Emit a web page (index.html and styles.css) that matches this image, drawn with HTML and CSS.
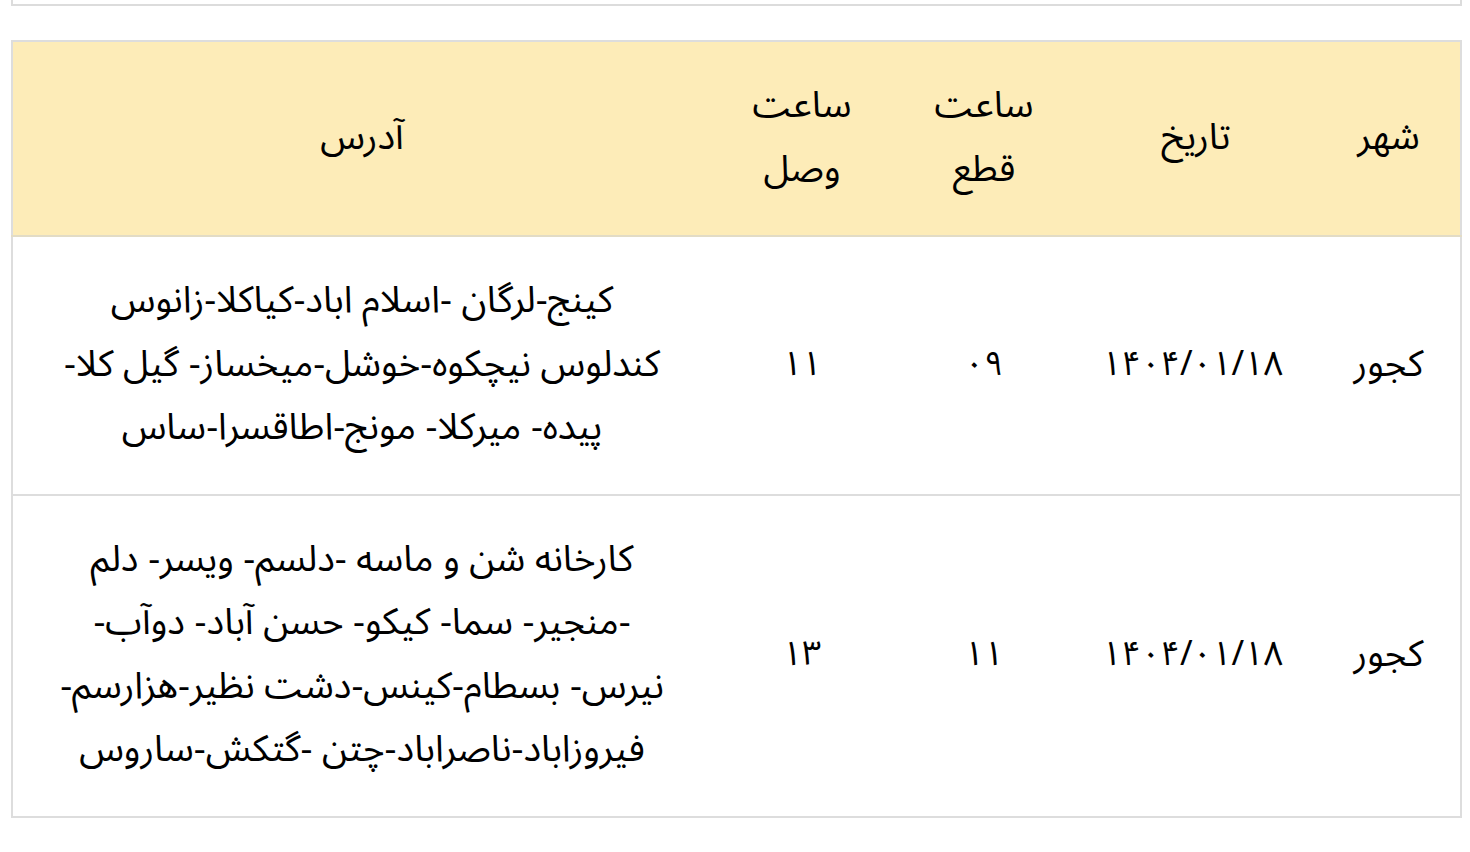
FILE: index.html
```html
<!DOCTYPE html>
<html lang="fa" dir="rtl">
<head>
<meta charset="utf-8">
<title>جدول خاموشی</title>
<link rel="stylesheet" href="styles.css">
</head>
<body>
<div class="page">
  <div class="prev-box"></div>
  <table class="outage">
    <colgroup>
      <col class="c-city">
      <col class="c-date">
      <col class="c-time">
      <col class="c-time">
      <col class="c-addr">
    </colgroup>
    <thead>
      <tr>
        <th>شهر</th>
        <th>تاریخ</th>
        <th>ساعت<br>قطع</th>
        <th>ساعت<br>وصل</th>
        <th>آدرس</th>
      </tr>
    </thead>
    <tbody>
      <tr>
        <td>کجور</td>
        <td class="num">۱۴۰۴/۰۱/۱۸</td>
        <td class="num">۰۹</td>
        <td class="num">۱۱</td>
        <td>کینج-لرگان -اسلام اباد-کیاکلا-زانوس کندلوس نیچکوه-خوشل-میخساز- گیل کلا- پیده- میرکلا- مونج-اطاقسرا-ساس</td>
      </tr>
      <tr>
        <td>کجور</td>
        <td class="num">۱۴۰۴/۰۱/۱۸</td>
        <td class="num">۱۱</td>
        <td class="num">۱۳</td>
        <td>کارخانه شن و ماسه -دلسم- ویسر- دلم -منجیر- سما- کیکو- حسن آباد- دوآب- نیرس- بسطام-کینس-دشت نظیر-هزارسم- فیروزاباد-ناصراباد-چتن -گتکش-ساروس</td>
      </tr>
    </tbody>
  </table>
</div>
</body>
</html>
```
FILE: styles.css
```css
html, body {
  margin: 0;
  padding: 0;
  background: #ffffff;
}
body {
  font-family: "Noto Sans Arabic", "Noto Sans", "DejaVu Sans", sans-serif;
  color: #000000;
}
.page {
  padding: 0 8px 0 11px;
}
.prev-box {
  height: 4px;
  border: 2px solid #dcdcdc;
  border-top: none;
  margin-bottom: 34px;
}
.outage {
  width: 1451px;
  border-collapse: collapse;
  table-layout: fixed;
  border: 2px solid #dddddd;
}
.c-city { width: 144px; }
.c-date { width: 242px; }
.c-time { width: 182px; }
.c-addr { width: auto; }
.outage th,
.outage td {
  padding: 32px 34px 34px;
  font-size: 37px;
  font-weight: normal;
  line-height: 63.5px;
  text-align: center;
  vertical-align: middle;
}
.outage td.num {
  font-size: 34px;
}
.outage thead th {
  background: #fdecb8;
  border-bottom: 2px solid #e2dcc6;
}
.outage tbody tr + tr td {
  border-top: 2px solid #dddddd;
}
```
